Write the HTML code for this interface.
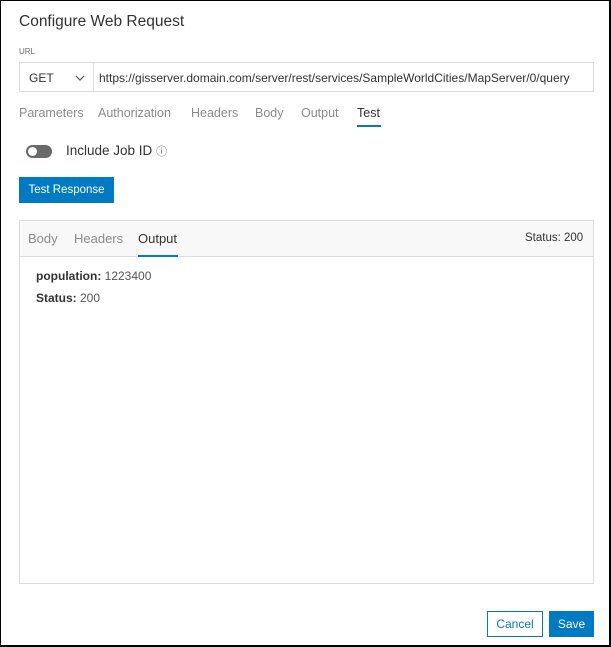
<!DOCTYPE html>
<html><head><style>
*{box-sizing:border-box;margin:0;padding:0}
body{width:611px;height:647px;background:#fff;font-family:"Liberation Sans",sans-serif;position:relative;overflow:hidden}
.frame{position:absolute;left:0;top:0;width:611px;height:647px;border:1px solid #000;border-bottom-width:2px;border-right-width:2px}
.a{position:absolute;white-space:nowrap}
.t{font-size:12.5px;color:#8a8a8a;top:106px}
</style></head><body>
<div class="frame"></div>
<div class="a" style="left:19px;top:13px;font-size:15.5px;color:#323232">Configure Web Request</div>
<div class="a" style="left:19px;top:47px;font-size:8px;color:#6a6a6a">URL</div>
<div class="a" style="left:19px;top:62px;width:75px;height:30px;border:1px solid #dcdcdc;font-size:12px;color:#323232;padding:8px 0 0 9px">GET
<svg style="position:absolute;left:55px;top:12px" width="10" height="6"><path d="M1 1l4 4 4-4" fill="none" stroke="#555" stroke-width="1.2"/></svg></div>
<div class="a" style="left:93px;top:62px;width:501px;height:30px;border:1px solid #dcdcdc;font-size:12px;color:#323232;padding:8px 0 0 5px">https://gisserver.domain.com/server/rest/services/SampleWorldCities/MapServer/0/query</div>
<div class="a t" style="left:19px">Parameters</div>
<div class="a t" style="left:98px">Authorization</div>
<div class="a t" style="left:191px">Headers</div>
<div class="a t" style="left:255px">Body</div>
<div class="a t" style="left:301px">Output</div>
<div class="a t" style="left:357px;color:#323232">Test</div>
<div class="a" style="left:357px;top:125px;width:24px;height:2px;background:#007ac2"></div>
<div class="a" style="left:26px;top:145px;width:26px;height:13px;border-radius:7px;background:#6a6a6a"></div>
<div class="a" style="left:28px;top:147px;width:9px;height:9px;border-radius:50%;background:#fff"></div>
<div class="a" style="left:66px;top:143px;font-size:13.5px;color:#323232">Include Job ID <span style="font-size:11px;color:#666">&#9432;</span></div>
<div class="a" style="left:19px;top:177px;width:95px;height:26px;background:#007ac2;color:#fff;font-size:11.5px;text-align:center;line-height:26px">Test Response</div>
<div class="a" style="left:19px;top:220px;width:575px;height:364px;border:1px solid #dcdcdc"></div>
<div class="a" style="left:20px;top:221px;width:573px;height:36px;background:#f8f8f8;border-bottom:1px solid #dcdcdc"></div>
<div class="a" style="left:28px;top:231px;font-size:13px;color:#8a8a8a">Body</div>
<div class="a" style="left:74px;top:231px;font-size:13px;color:#8a8a8a">Headers</div>
<div class="a" style="left:138px;top:231px;font-size:13px;color:#323232">Output</div>
<div class="a" style="left:138px;top:255px;width:40px;height:2px;background:#007ac2"></div>
<div class="a" style="left:525px;top:232px;font-size:11.5px;color:#323232">Status: 200</div>
<div class="a" style="left:36px;top:269px;font-size:12px;color:#555"><b style="color:#323232">population:</b> 1223400</div>
<div class="a" style="left:36px;top:291px;font-size:12px;color:#555"><b style="color:#323232">Status:</b> 200</div>
<div class="a" style="left:487px;top:611px;width:56px;height:26px;border:1px solid #007ac2;color:#007ac2;font-size:12px;text-align:center;line-height:24px">Cancel</div>
<div class="a" style="left:549px;top:611px;width:45px;height:26px;background:#007ac2;color:#fff;font-size:12px;text-align:center;line-height:26px">Save</div>
</body></html>
